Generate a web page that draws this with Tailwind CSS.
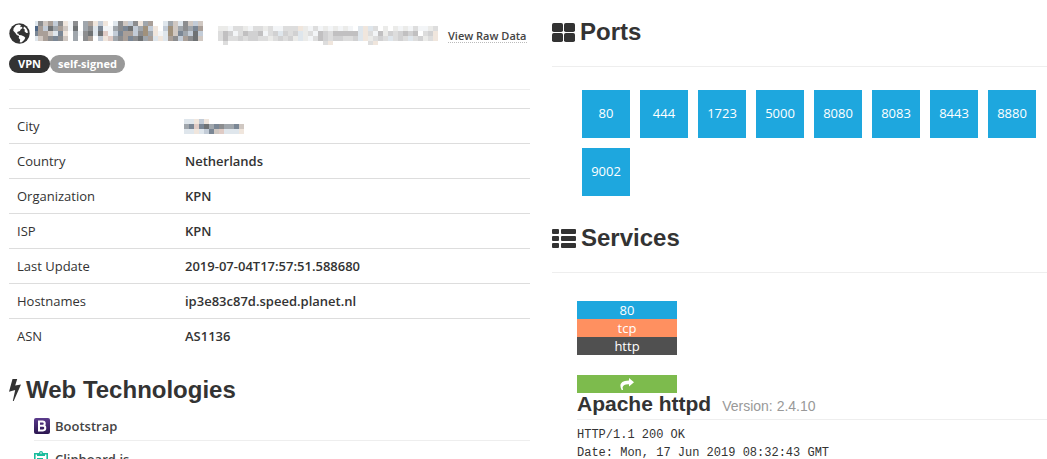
<!DOCTYPE html>
<html lang="en">
<head>
<meta charset="utf-8">
<title>Host details</title>
<script src="https://cdn.jsdelivr.net/npm/@tailwindcss/browser@4"></script>
</head>
<body class="bg-white font-['Open_Sans',sans-serif] text-[13px] leading-[18px] text-[#333]">
<div class="grid h-screen grid-cols-[521fr_495fr] gap-[22px] overflow-hidden pl-[9px]">
  <main class="min-w-0">
    <header class="border-b border-[#eee] pt-[21px] pb-4">
      <h1 class="flex h-6 items-start">
        <svg class="mt-[2px] mr-[5px] size-[21px] shrink-0" viewBox="0 0 21 21" aria-hidden="true"><circle cx="10.5" cy="10.5" r="10.2" fill="#333"/><path fill="#fff" d="M7 2.3 10 1.6l2 1-1 1.6 1.6-.4 1 1.2-2 1.4-.7 1.6-2.2.7-.8 1.6 1.6.4.5 1.3 2.3.2 2.8 1.4 1.2 1.2-1 2-1.4 1.5-1.6 1.1-1.6-.1.5-2.6-1.5-1.8.4-1.8-2.3-1.1-1.6-2.3-1.9-2 .3-2.4 1.6-2zM15 3.5l2 1.6 1.3 2.1.7 2.6-1.6.1-1.8-1.5.2-1.8-1.4-1z"/></svg>
        <svg class="h-5 w-[168px] shrink-0" data-mosaic="ip" viewBox="2 0 168 20" shape-rendering="crispEdges" role="img" aria-label="Redacted address"></svg>
        <svg class="mt-[5px] ml-[15px] h-[19px] w-[220px] shrink-0" data-mosaic="host" viewBox="0 0 220 19" shape-rendering="crispEdges" role="img" aria-label="Redacted hostname"></svg>
        <a href="#raw" class="mt-[9px] ml-[10px] border-b border-dotted border-[#bbb] text-[11px] leading-[12px] font-semibold whitespace-nowrap text-[#444]">View Raw Data</a>
      </h1>
      <div class="mt-[10px] flex text-[11px] leading-[18px] font-bold text-white">
        <span class="rounded-full bg-[#333] px-[9px]">VPN</span>
        <span class="rounded-full bg-[#999] px-2">self-signed</span>
      </div>
    </header>
    <table class="mt-[18px] w-full table-fixed text-left">
      <tbody>
        <tr class="h-[35px] border-t border-[#ddd]"><th scope="row" class="w-[168px] px-2 font-normal">City</th><td class="px-2"><svg class="-ml-px h-[15px] w-[60px]" data-mosaic="city" viewBox="0 0 60 15" shape-rendering="crispEdges" role="img" aria-label="Redacted city"></svg></td></tr>
        <tr class="h-[35px] border-t border-[#ddd]"><th scope="row" class="px-2 font-normal">Country</th><td class="px-2 font-semibold">Netherlands</td></tr>
        <tr class="h-[35px] border-t border-[#ddd]"><th scope="row" class="px-2 font-normal">Organization</th><td class="px-2 font-semibold">KPN</td></tr>
        <tr class="h-[35px] border-t border-[#ddd]"><th scope="row" class="px-2 font-normal">ISP</th><td class="px-2 font-semibold">KPN</td></tr>
        <tr class="h-[35px] border-t border-[#ddd]"><th scope="row" class="px-2 font-normal">Last Update</th><td class="px-2 font-semibold">2019-07-04T17:57:51.588680</td></tr>
        <tr class="h-[35px] border-t border-[#ddd]"><th scope="row" class="px-2 font-normal">Hostnames</th><td class="px-2 font-semibold">ip3e83c87d.speed.planet.nl</td></tr>
        <tr class="h-[35px] border-t border-[#ddd]"><th scope="row" class="px-2 font-normal">ASN</th><td class="px-2 font-semibold">AS1136</td></tr>
      </tbody>
    </table>
    <h2 class="mt-[18px] mb-1 flex items-center gap-[5px] font-['Liberation_Sans',Arial,sans-serif] text-2xl leading-9 font-bold">
      <svg class="h-[22px] w-3" viewBox="0 0 12 22" aria-hidden="true"><path fill="#333" d="M3.5 0H8.2L6.2 6.6 12 5.4 4.7 22H3.8L6.2 11.1 0 12.7Z"/></svg>
      Web Technologies
    </h2>
    <ul class="ml-[25px] font-semibold text-[#444]">
      <li class="flex h-[29px] items-center gap-[5px] border-b border-[#eee]">
        <svg class="size-4" viewBox="0 0 16 16" aria-hidden="true"><defs><linearGradient id="bs" x2="0" y2="1"><stop stop-color="#5b3b8c"/><stop offset="1" stop-color="#2b1650"/></linearGradient></defs><rect width="16" height="16" rx="2" fill="url(#bs)"/><path fill="none" stroke="#fff" stroke-width="2" d="M5 3.5H8.6a2.1 2.1 0 0 1 0 4.3H5M5 7.8H9a2.3 2.3 0 0 1 0 4.6H5V2.6"/></svg>
        Bootstrap
      </li>
      <li class="flex h-[38px] items-center gap-[7px] border-b border-[#eee]">
        <svg class="h-4 w-[14px]" viewBox="0 0 14 16" aria-hidden="true"><path fill="none" stroke="#1abc9c" stroke-width="1.6" d="M3 2.8H.8V15.2H13.2V2.8H11"/><path fill="#1abc9c" d="M3 2H5a2 2 0 0 1 4 0h2V5H3zM3 7h6v1.3H3zM3 10h4v1.3H3z"/><circle cx="7" cy="2" r=".8" fill="#fff"/></svg>
        Clipboard.js
      </li>
    </ul>
  </main>
  <section class="min-w-0">
    <h2 class="flex items-center gap-[5px] border-b border-[#eee] pt-[14px] pb-[17px] font-['Liberation_Sans',Arial,sans-serif] text-2xl leading-[35px] font-bold">
      <svg class="mt-[2px] h-[19px] w-[23px]" viewBox="0 0 23 19" fill="#333" aria-hidden="true"><rect width="11" height="9" rx="1.8"/><rect x="12" width="11" height="9" rx="1.8"/><rect y="10" width="11" height="9" rx="1.8"/><rect x="12" y="10" width="11" height="9" rx="1.8"/></svg>
      Ports
    </h2>
    <nav aria-label="Ports" class="flex flex-wrap gap-[10px] pt-[23px] pl-[30px] text-center leading-[46px] text-white">
      <a href="#80" class="size-12 bg-[#1ea7de]">80</a>
      <a href="#444" class="size-12 bg-[#1ea7de]">444</a>
      <a href="#1723" class="size-12 bg-[#1ea7de]">1723</a>
      <a href="#5000" class="size-12 bg-[#1ea7de]">5000</a>
      <a href="#8080" class="size-12 bg-[#1ea7de]">8080</a>
      <a href="#8083" class="size-12 bg-[#1ea7de]">8083</a>
      <a href="#8443" class="size-12 bg-[#1ea7de]">8443</a>
      <a href="#8880" class="size-12 bg-[#1ea7de]">8880</a>
      <a href="#9002" class="size-12 bg-[#1ea7de]">9002</a>
    </nav>
    <h2 class="mt-6 flex items-center gap-[5px] border-b border-[#eee] pb-[17px] font-['Liberation_Sans',Arial,sans-serif] text-2xl leading-[35px] font-bold">
      <svg class="mt-[2px] h-[19px] w-6" viewBox="0 0 24 19" fill="#333" aria-hidden="true"><rect width="7" height="5" rx="1"/><rect x="9" width="15" height="5" rx="1"/><rect y="7" width="7" height="5" rx="1"/><rect x="9" y="7" width="15" height="5" rx="1"/><rect y="14" width="7" height="5" rx="1"/><rect x="9" y="14" width="15" height="5" rx="1"/></svg>
      Services
    </h2>
    <article class="pt-7 pl-[25px]">
      <div class="w-[100px] text-center text-white">
        <div class="bg-[#1ea7de]">80</div>
        <div class="bg-[#ff9060]">tcp</div>
        <div class="bg-[#505050]">http</div>
        <a id="80" href="#details" aria-label="Open service" class="mt-5 flex h-[18px] items-center justify-center bg-[#7dbb4d]">
          <svg class="h-3 w-[14px]" viewBox="0 0 14 12" aria-hidden="true"><path fill="#fff" d="M9 0 14 4.3 9 8.6V6.2C5.2 6 3.2 7 2.6 9.2L3 12H1.7C-.8 7.5-.3 2.5 9 2.4Z"/></svg>
        </a>
      </div>
      <h3 class="flex items-baseline gap-[11px] border-b border-[#eee] pb-[2px] font-['Liberation_Sans',Arial,sans-serif] text-[21px] leading-[22px] font-bold">Apache httpd <small class="text-sm leading-[22px] font-normal text-[#999]">Version: 2.4.10</small></h3>
      <pre class="mt-[6px] font-['Liberation_Mono',monospace] text-xs leading-[18px]">HTTP/1.1 200 OK
Date: Mon, 17 Jun 2019 08:32:43 GMT</pre>
    </article>
  </section>
</div>
<script>
// Redaction mosaics: one letter per 5px cell, one string per row.
const colors = {
  w: "#ffffff", i: "#f3f5f7", b: "#dfe6ec", l: "#c3ccd7", g: "#a0a6ac", m: "#8c8d8f",
  k: "#6f7274", n: "#a0917c", t: "#a99f98", s: "#d0c8c2", p: "#f0e6dd", r: "#dfcbc5",
  u: "#7b8795", d: "#4f6786", a: "#ebebe9", c: "#dddddd", e: "#d1d1d2", f: "#c1c0c1"
};
const mosaics = {
  ip: [
    "bmstlmpimwgtplpwbmslmpgtwwbgsbmsls",
    "dtlkgtsikwgmbuiigmuklgnlpwlnsgmgut",
    "uttsbupwgimkbkriluttlmngpibnsuglkl",
    "bstmumswgwmtwlprgmtumkgtbpbtmltmks"
  ],
  host: [
    "aaiccaiccaciicccpaiciaiaiaiwbpbcwawaiaiciiac",
    "cfeicfeeficebecebacifecfffffbpcifaecefefwcep",
    "cfcceceeccaceceabaicfeceeccebpacecbcecbceacp",
    "wcwwwwwwwwwwwwwwwwwwwcpwwwwwwwcpwwwwwwwwwwww"
  ],
  city: ["bbplpwwwwwww", "gurukgumggus", "bbpblusrbbbp"]
};
for (const svg of document.querySelectorAll("[data-mosaic]")) {
  mosaics[svg.dataset.mosaic].forEach((row, y) => {
    [...row].forEach((key, x) => {
      const cell = document.createElementNS("http://www.w3.org/2000/svg", "rect");
      cell.setAttribute("x", x * 5);
      cell.setAttribute("y", y * 5);
      cell.setAttribute("width", 5);
      cell.setAttribute("height", 5);
      cell.setAttribute("fill", colors[key]);
      svg.append(cell);
    });
  });
}
</script>
</body>
</html>
